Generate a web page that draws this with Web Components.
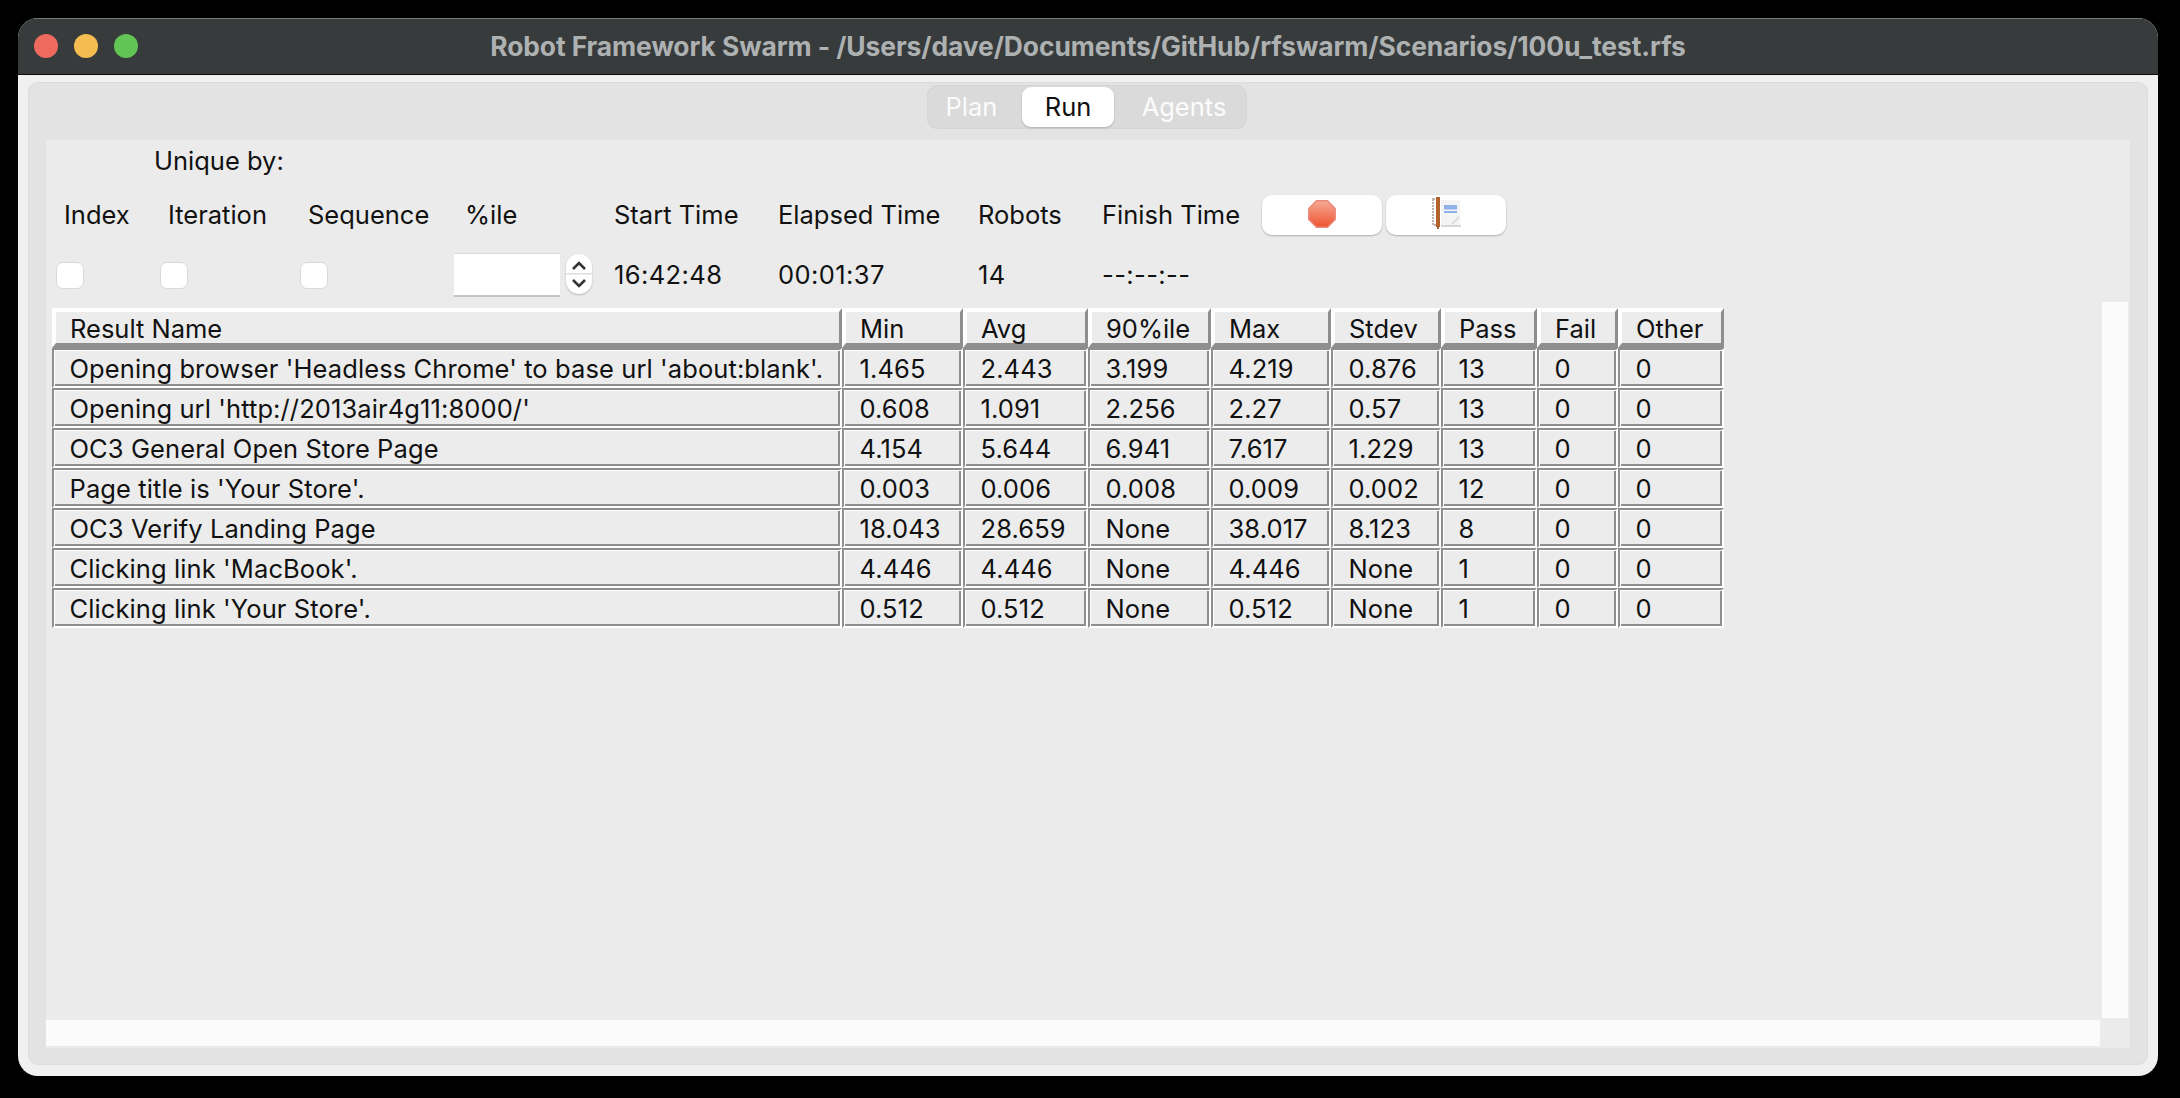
<!DOCTYPE html>
<html lang="en">
<head>
<meta charset="utf-8">
<title>Robot Framework Swarm</title>
<style>
    html, body { margin: 0; padding: 0; background: #000; }
    body { font-family: Inter, "Liberation Sans", sans-serif; font-size: 25.5px; color: #111; }
</style>
</head>
<body>
<rf-window window-title="Robot Framework Swarm - /Users/dave/Documents/GitHub/rfswarm/Scenarios/100u_test.rfs">
    <rf-tabs selected="Run" names="Plan,Run,Agents"></rf-tabs>
    <rf-content>
        <rf-form slot="form"></rf-form>
        <rf-table slot="table"></rf-table>
    </rf-content>
</rf-window>

<script>
const columns = [
    { name: 'Result Name', width: 790 },
    { name: 'Min', width: 121 },
    { name: 'Avg', width: 125 },
    { name: '90%ile', width: 123 },
    { name: 'Max', width: 120 },
    { name: 'Stdev', width: 110 },
    { name: 'Pass', width: 96 },
    { name: 'Fail', width: 81 },
    { name: 'Other', width: 106 }
];

const results = [
    ["Opening browser 'Headless Chrome' to base url 'about:blank'.", '1.465', '2.443', '3.199', '4.219', '0.876', '13', '0', '0'],
    ["Opening url 'http://2013air4g11:8000/'", '0.608', '1.091', '2.256', '2.27', '0.57', '13', '0', '0'],
    ['OC3 General Open Store Page', '4.154', '5.644', '6.941', '7.617', '1.229', '13', '0', '0'],
    ["Page title is 'Your Store'.", '0.003', '0.006', '0.008', '0.009', '0.002', '12', '0', '0'],
    ['OC3 Verify Landing Page', '18.043', '28.659', 'None', '38.017', '8.123', '8', '0', '0'],
    ["Clicking link 'MacBook'.", '4.446', '4.446', 'None', '4.446', 'None', '1', '0', '0'],
    ["Clicking link 'Your Store'.", '0.512', '0.512', 'None', '0.512', 'None', '1', '0', '0']
];

class RfWindow extends HTMLElement {
    constructor() {
        super();
        this.attachShadow({ mode: 'open' });
    }

    connectedCallback() {
        this.shadowRoot.innerHTML = `
            <style>
                :host {
                    display: flex;
                    flex-direction: column;
                    box-sizing: border-box;
                    width: 2140px;
                    height: 1058px;
                    margin: 18px 0 0 18px;
                    background: #f0f0f0;
                    border-radius: 20px;
                    overflow: hidden;
                }
                .bar {
                    position: relative;
                    flex: none;
                    box-sizing: border-box;
                    height: 57px;
                    background: #373b3c;
                    border-top: 1.5px solid #797c7c;
                    border-bottom: 1.5px solid #0b0c0c;
                    display: flex;
                    align-items: center;
                    justify-content: center;
                    color: #aeb1b1;
                    font-weight: 700;
                    font-size: 26.4px;
                    letter-spacing: -0.08px;
                }
                .bar span { margin-top: -2px; }
                .lights { position: absolute; left: 16px; top: 15px; display: flex; gap: 16px; }
                .lights i { width: 24px; height: 24px; border-radius: 50%; display: block; }
                .panel {
                    flex: 1;
                    min-height: 0;
                    margin: 7px 10px 11px;
                    background: #e3e3e3;
                    border-radius: 11px;
                    box-shadow: inset 0 0 0 1px #dcdcdc;
                    display: flex;
                    flex-direction: column;
                }
            </style>
            <div class="bar">
                <div class="lights">
                    <i style="background:#ee6a5f"></i>
                    <i style="background:#f5bd4f"></i>
                    <i style="background:#61c454"></i>
                </div>
                <span>${this.getAttribute('window-title')}</span>
            </div>
            <div class="panel"><slot></slot></div>
        `;
    }
}

class RfTabs extends HTMLElement {
    constructor() {
        super();
        this.attachShadow({ mode: 'open' });
    }

    connectedCallback() {
        const selected = this.getAttribute('selected');
        const names = this.getAttribute('names').split(',');
        this.shadowRoot.innerHTML = `
            <style>
                :host { display: flex; flex: none; justify-content: center; height: 58px; padding: 3px 2px 0 0; box-sizing: border-box; }
                .seg {
                    display: flex;
                    box-sizing: border-box;
                    width: 320px;
                    height: 44px;
                    padding: 2px;
                    background: #dadada;
                    border-radius: 11px;
                    box-shadow: inset 0 0 0 1px #d5d5d5;
                }
                .tab {
                    display: flex;
                    align-items: center;
                    justify-content: center;
                    box-sizing: border-box;
                    color: #fcfcfc;
                    padding-bottom: 1px;
                }
                .tab.Plan { width: 93px; padding-right: 8px; }
                .tab.Run { width: 92px; background: #fff; color: #111; border-radius: 9px; box-shadow: 0 1px 2px rgba(0,0,0,.2); }
                .tab.Agents { flex: 1; padding-left: 9px; }
            </style>
            <div class="seg">
                ${names.map(n => `<div class="tab ${n}" aria-selected="${n === selected}">${n}</div>`).join('')}
            </div>
        `;
    }
}

class RfContent extends HTMLElement {
    constructor() {
        super();
        this.attachShadow({ mode: 'open' });
    }

    connectedCallback() {
        this.shadowRoot.innerHTML = `
            <style>
                :host {
                    display: grid;
                    flex: 1;
                    min-height: 0;
                    margin: 0 18px 17px;
                    background: #ebebeb;
                    grid-template-columns: 2054px 30px;
                    grid-template-rows: 162px 716px 2px 26px 2px;
                }
                .form { grid-column: 1 / -1; grid-row: 1; }
                .table { grid-column: 1; grid-row: 2; padding: 6px 0 0 6px; }
                .vbar { grid-column: 2; grid-row: 2; margin: 0 2px; background: #fbfbfb; }
                .hbar { grid-column: 1; grid-row: 4; background: #fbfbfb; }
            </style>
            <div class="form"><slot name="form"></slot></div>
            <div class="table"><slot name="table"></slot></div>
            <div class="vbar"></div>
            <div class="hbar"></div>
        `;
    }
}

class RfForm extends HTMLElement {
    constructor() {
        super();
        this.attachShadow({ mode: 'open' });
    }

    connectedCallback() {
        this.shadowRoot.innerHTML = `
            <style>
                :host {
                    display: grid;
                    padding-left: 10px;
                    grid-template-columns: 104px 140px 154px 160px 164px 200px 124px 160px auto;
                    grid-template-rows: 42px 66px 54px;
                    align-items: center;
                }
                .unique { grid-column: 1 / -1; padding: 0 0 1px 98px; }
                .label { padding-bottom: 1px; }
                .value { padding-bottom: 1px; letter-spacing: .4px; }
                .check {
                    width: 28px;
                    height: 27px;
                    box-sizing: border-box;
                    background: #fff;
                    border: 1px solid #d9d9d9;
                    border-radius: 7px;
                }
                .spin { display: flex; align-items: center; }
                .input {
                    width: 106px;
                    height: 44px;
                    box-sizing: border-box;
                    background: #fff;
                    border-top: 1px solid #dcdcdc;
                    border-bottom: 2px solid #c4c4c4;
                }
                .stepper {
                    margin: 0 0 2px 6px;
                    width: 26px;
                    height: 40px;
                    background: #fff;
                    border-radius: 13px;
                    box-shadow: 0 1px 2px rgba(0,0,0,.22);
                    display: block;
                }
                .btns { display: flex; gap: 4px; }
                .btn {
                    width: 120px;
                    height: 40px;
                    background: #fff;
                    border-radius: 10px;
                    box-shadow: 0 1px 2px rgba(0,0,0,.25);
                    display: flex;
                    align-items: center;
                    justify-content: center;
                }
            </style>
            <div class="unique">Unique by:</div>
            <div class="label" style="padding-left:8px">Index</div>
            <div class="label" style="padding-left:8px">Iteration</div>
            <div class="label" style="padding-left:8px">Sequence</div>
            <div class="label" style="padding-left:11px">%ile</div>
            <div class="label">Start Time</div>
            <div class="label">Elapsed Time</div>
            <div class="label">Robots</div>
            <div class="label">Finish Time</div>
            <div class="btns">
                <div class="btn">
                    <svg width="28" height="28" viewBox="0 0 28 28" style="margin-top:-3px">
                        <defs>
                            <linearGradient id="stop" x1="0" y1="0" x2="0" y2="1">
                                <stop offset="0" stop-color="#f4ab95"/>
                                <stop offset="1" stop-color="#ee5230"/>
                            </linearGradient>
                        </defs>
                        <polygon points="8.5,0.8 19.5,0.8 27.2,8.5 27.2,19.5 19.5,27.2 8.5,27.2 0.8,19.5 0.8,8.5" fill="url(#stop)" stroke="#ea8a7c" stroke-width="1.5"/>
                    </svg>
                </div>
                <div class="btn">
                    <svg width="30" height="34" viewBox="0 0 30 34" style="margin:-4px 0 0 2px">
                        <rect x="9" y="4" width="19" height="26" fill="#f4f4f4"/>
                        <rect x="9" y="29" width="20" height="2" fill="#d6d6d6"/>
                        <path d="M20 28 L27 21" stroke="#dcdcdc" stroke-width="2" fill="none"/>
                        <rect x="1" y="3" width="5" height="26" fill="none" stroke="#bdb4ac" stroke-width="2" stroke-dasharray="2 1"/>
                        <rect x="4" y="1" width="4" height="30" fill="#b4622c"/>
                        <rect x="5.2" y="31" width="1.6" height="2" fill="#7a3f18"/>
                        <rect x="12" y="9" width="13" height="4.5" fill="#8fb0ea"/>
                        <rect x="12" y="15" width="13" height="2" fill="#8fb0ea"/>
                    </svg>
                </div>
            </div>
            <div><div class="check"></div></div>
            <div><div class="check"></div></div>
            <div><div class="check"></div></div>
            <div class="spin">
                <div class="input"></div>
                <svg class="stepper" viewBox="0 0 26 40">
                    <path d="M7 15 L13 9 L19 15" fill="none" stroke="#333" stroke-width="2.6"/>
                    <rect x="0" y="19" width="26" height="1.5" fill="#dedede"/>
                    <path d="M7 26 L13 32 L19 26" fill="none" stroke="#333" stroke-width="2.6"/>
                </svg>
            </div>
            <div class="value">16:42:48</div>
            <div class="value">00:01:37</div>
            <div class="value">14</div>
            <div class="value">--:--:--</div>
        `;
    }
}

class RfCell extends HTMLElement {
    constructor() {
        super();
        this.attachShadow({ mode: 'open' });
        this.shadowRoot.innerHTML = `
            <style>
                :host {
                    display: flex;
                    align-items: center;
                    box-sizing: border-box;
                    min-width: 0;
                    height: 40px;
                    padding-left: 15.5px;
                    white-space: nowrap;
                    letter-spacing: .1px;
                    background: #ececec;
                    border: 2px solid;
                    border-color: #8e8e8e #fff #fff #8e8e8e;
                    box-shadow: inset 1px 1px 0 #fff, inset -2px -2px 0 #8e8e8e;
                }
                :host([head]) {
                    padding: 1px 0 0 14px;
                    letter-spacing: 0;
                    border-width: 4px 3px 5px 4px;
                    border-color: #fff #8e8e8e #8e8e8e #fff;
                    box-shadow: none;
                }
            </style>
            <slot></slot>
        `;
    }
}

class RfTable extends HTMLElement {
    constructor() {
        super();
        this.attachShadow({ mode: 'open' });
    }

    connectedCallback() {
        const template = columns.map(c => c.width + 'px').join(' ');
        this.shadowRoot.innerHTML = `
            <style>
                :host { display: grid; grid-template-columns: ${template}; width: max-content; }
            </style>
            ${columns.map(c => `<rf-cell head>${c.name}</rf-cell>`).join('')}
            ${results.map(r => r.map(v => `<rf-cell>${v}</rf-cell>`).join('')).join('')}
        `;
    }
}

customElements.define('rf-window', RfWindow);
customElements.define('rf-tabs', RfTabs);
customElements.define('rf-content', RfContent);
customElements.define('rf-form', RfForm);
customElements.define('rf-cell', RfCell);
customElements.define('rf-table', RfTable);
</script>
</body>
</html>
